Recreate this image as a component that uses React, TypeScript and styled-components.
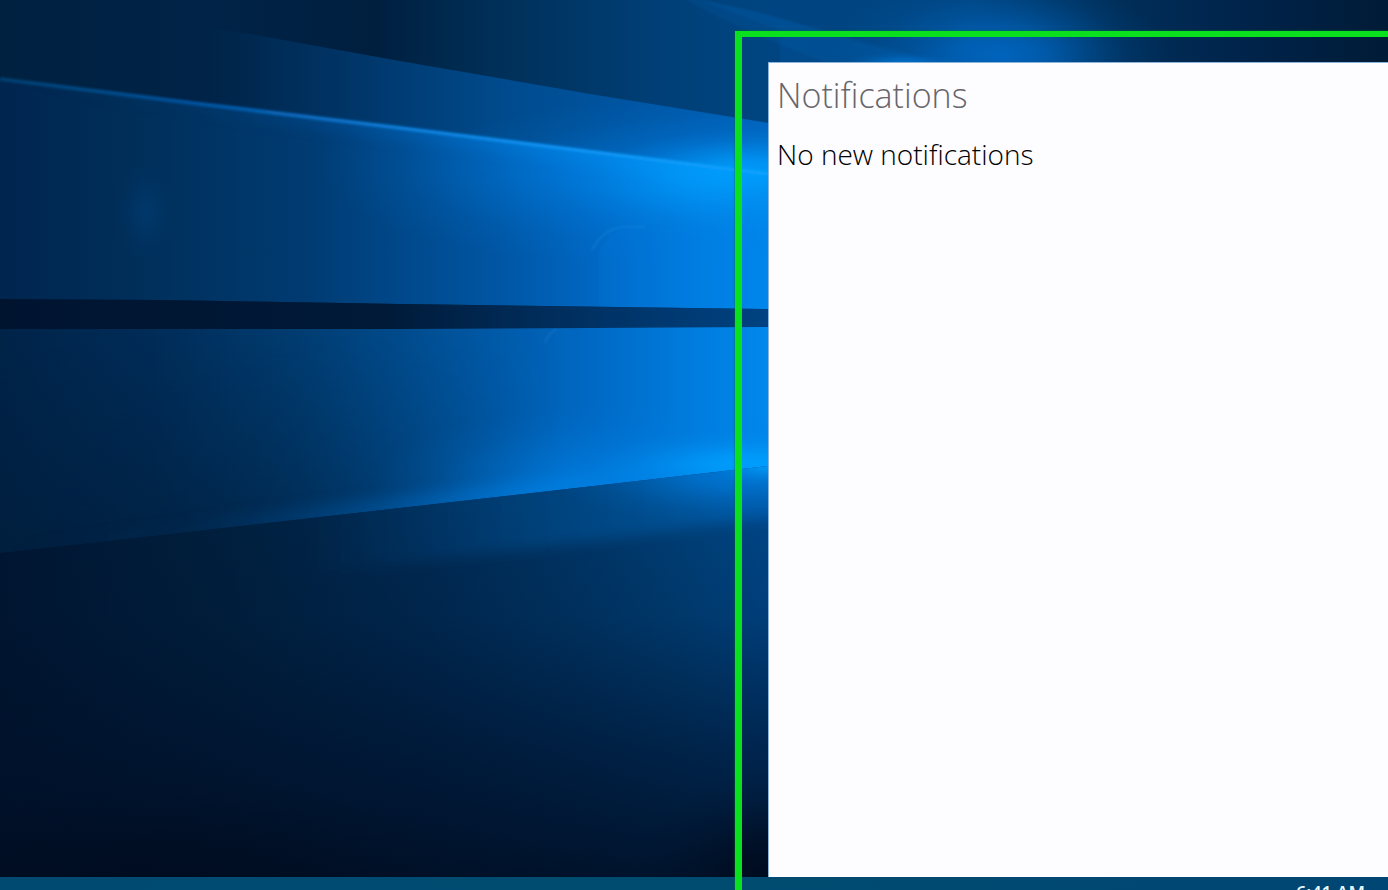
import React from "react";
import styled, { createGlobalStyle } from "styled-components";

const GlobalStyle = createGlobalStyle`
  *, *::before, *::after { box-sizing: border-box; }
  body {
    margin: 0;
    font-family: "Open Sans", "Noto Sans", sans-serif;
    background: #001c38;
  }
`;

const Desktop = styled.div`
  position: relative;
  display: grid;
  grid-template-columns: minmax(0, 735fr) minmax(0, 653fr);
  grid-template-rows: minmax(0, 1fr) 13px;
  height: 100vh;
  overflow: hidden;
`;

const Wallpaper = styled.svg`
  position: absolute;
  inset: 0;
  width: 100%;
  height: 100%;
`;

const Taskbar = styled.footer`
  position: relative;
  grid-column: 1 / -1;
  grid-row: 2;
  display: flex;
  justify-content: flex-end;
  align-items: flex-start;
  padding: 3px 23px 0;
  overflow: hidden;
  background: linear-gradient(90deg, #004a72, #004c70 50%, #004674);
`;

const Clock = styled.time`
  font-size: 18px;
  line-height: 24px;
  font-weight: 600;
  color: #e8fbff;
  white-space: nowrap;
`;

const Highlight = styled.div`
  position: relative;
  grid-column: 2;
  grid-row: 1 / -1;
  display: flex;
  margin-top: 31px;
  padding: 25px 0 13px 26px;
  border: solid #0be01f;
  border-width: 6px 0 0 7px;
  box-shadow: 0 0 2px #04702a;
`;

const Panel = styled.section`
  flex: 1;
  padding: 8px;
  background: #fdfcff;
  border: solid #8db4d8;
  border-width: 1px 0 0 1px;
`;

const Title = styled.h1`
  margin: 0;
  font-size: 34px;
  line-height: 48px;
  font-weight: 330;
  color: #67656b;
`;

const Message = styled.p`
  margin: 15px 0 0;
  font-size: 28px;
  line-height: 40px;
  font-weight: 330;
  color: #000;
`;

type Stop = [number, string, number?];

const Stops = ({ list }: { list: Stop[] }) => (
  <>
    {list.map(([offset, color, opacity = 1]) => (
      <stop key={offset} offset={offset} stopColor={color} stopOpacity={opacity} />
    ))}
  </>
);

const Across = ({ id, list }: { id: string; list: Stop[] }) => (
  <linearGradient id={id} gradientUnits="userSpaceOnUse" x1="0" y1="0" x2="768" y2="0">
    <Stops list={list} />
  </linearGradient>
);

const Glow = ({ id, color, strength }: { id: string; color: string; strength: number }) => (
  <radialGradient id={id}>
    <Stops list={[[0, color, strength], [0.25, color, strength * 0.8], [0.5, color, strength * 0.42], [0.75, color, strength * 0.13], [1, color, 0]]} />
  </radialGradient>
);

const WindowLight = () => (
  <Wallpaper viewBox="0 0 1388 890" preserveAspectRatio="none" aria-hidden="true">
    <defs>
      <linearGradient id="sky" gradientUnits="userSpaceOnUse" x1="0" y1="0" x2="1388" y2="0">
        <Stops list={[[0, "#002140"], [0.15, "#002347"], [0.27, "#001f3f"], [0.36, "#003059"], [0.48, "#004078"], [0.56, "#004582"], [0.7, "#004480"], [0.8, "#002f5a"], [0.9, "#00234a"], [1, "#001b36"]]} />
      </linearGradient>
      <Across id="band" list={[[0, "#002449", 0], [0.26, "#002c55", 0], [0.36, "#002f5c", 0.8], [0.5, "#003a70"], [0.65, "#004a8c"], [0.85, "#0057a6"], [1, "#0061b8"]]} />
      <Across id="upper" list={[[0, "#00254e"], [0.2, "#00305c"], [0.4, "#003b72"], [0.52, "#00488a"], [0.65, "#0056a4"], [0.78, "#0068c4"], [0.9, "#007cdf"], [1, "#0088ec"]]} />
      <Across id="gap" list={[[0, "#001430"], [0.5, "#001a38"], [0.65, "#002852"], [0.8, "#003468"], [1, "#004282"]]} />
      <Across id="lower" list={[[0, "#002348"], [0.2, "#002c58"], [0.4, "#003f76"], [0.52, "#004d90"], [0.65, "#005cac"], [0.78, "#006ac6"], [0.9, "#007cde"], [1, "#0088ec"]]} />
      <Across id="ground" list={[[0, "#001632"], [0.3, "#00203f"], [0.55, "#002952"], [0.75, "#003566"], [0.9, "#004078"], [1, "#004688"]]} />
      <Across id="underGlow" list={[[0.4, "#0066b8", 0], [0.7, "#0066b8", 0.3], [1, "#0068c0", 0.5]]} />
      <linearGradient id="fade" x1="0" y1="0" x2="0" y2="1">
        <Stops list={[[0, "#000c20", 0], [0.3, "#000f26", 0.15], [0.65, "#000f28", 0.6], [1, "#000c20", 0.88]]} />
      </linearGradient>
      <linearGradient id="shade" gradientUnits="userSpaceOnUse" x1="200" y1="330" x2="225" y2="530">
        <Stops list={[[0, "#001c38", 0], [1, "#001c38", 0.65]]} />
      </linearGradient>
      <linearGradient id="paneDim" gradientUnits="userSpaceOnUse" x1="0" y1="0" x2="560" y2="0">
        <Stops list={[[0, "#fff", 1], [0.45, "#fff", 0.85], [1, "#fff", 0]]} />
      </linearGradient>
      <mask id="leftOnly">
        <rect width="768" height="890" fill="url(#paneDim)" />
      </mask>
      <Across id="beam" list={[[0, "#0a4d84", 0.6], [0.25, "#06509a"], [0.5, "#0876ce"], [0.7, "#078cec"], [1, "#08a2ff"]]} />
      <Across id="edge" list={[[0, "#006fd0", 0], [0.25, "#005ca8", 0.08], [0.45, "#0068c0", 0.5], [0.7, "#0088ec", 0.9], [1, "#00a0ff"]]} />
      <Glow id="bright" color="#00a0ff" strength={0.85} />
      <Glow id="mid" color="#007de0" strength={0.8} />
      <Glow id="soft" color="#006ac8" strength={0.85} />
      <Glow id="dark" color="#000a1c" strength={0.85} />
      <clipPath id="bandClip"><path d="M0 0 L250 34 L400 61 L590 94 L768 123 V174 L0 78Z" /></clipPath>
      <clipPath id="upperClip"><path d="M0 78 L200 103 L400 127 L768 174 V309 L400 304 L160 300 L0 299Z" /></clipPath>
      <clipPath id="lowerClip"><path d="M0 329 H400 L768 327 V466 L400 508 L0 553Z" /></clipPath>
      <clipPath id="groundClip"><path d="M0 553 L400 508 L768 466 V890 H0Z" /></clipPath>
      <filter id="haze" x="-10%" y="-50%" width="120%" height="200%"><feGaussianBlur stdDeviation="7" /></filter>
      <filter id="line" x="-5%" y="-20%" width="110%" height="140%"><feGaussianBlur stdDeviation="1" /></filter>
    </defs>

    <rect width="1388" height="890" fill="url(#sky)" />
    <path d="M680 -4 C760 8 850 40 950 64 H830 C780 45 720 20 680 -4Z" fill="#0066bc" opacity="0.16" filter="url(#line)" />
    <path d="M700 0 C780 14 850 42 930 62 H780 V30 L700 0Z" fill="#0062b4" opacity="0.2" filter="url(#line)" />
    <ellipse cx="1000" cy="56" rx="170" ry="80" fill="url(#soft)" />
    <ellipse cx="900" cy="66" rx="60" ry="14" fill="url(#mid)" />

    <g clipPath="url(#bandClip)">
      <rect width="768" height="180" fill="url(#band)" />
      <ellipse cx="740" cy="175" rx="340" ry="80" fill="url(#mid)" />
      <ellipse cx="750" cy="172" rx="150" ry="42" fill="url(#bright)" />
    </g>

    <g clipPath="url(#upperClip)">
      <rect y="70" width="768" height="250" fill="url(#upper)" />
      <ellipse cx="640" cy="165" rx="320" ry="100" fill="url(#mid)" />
      <ellipse cx="720" cy="172" rx="170" ry="66" fill="url(#bright)" />
      <ellipse cx="145" cy="212" rx="30" ry="50" fill="url(#soft)" opacity="0.16" />
      <path d="M599 310 V265 Q594 242 622 229 H768 V310Z" fill="#0083ec" opacity="0.15" filter="url(#line)" />
      <path d="M592 250 Q602 230 622 227 H645" fill="none" stroke="#2a98ee" strokeWidth="2" opacity="0.25" filter="url(#line)" />
      <path d="M0 79 L400 130 L768 177" fill="none" stroke="url(#edge)" strokeWidth="20" opacity="0.45" filter="url(#haze)" />
    </g>
    <path d="M0 79 L200 104 L400 128 L768 174" fill="none" stroke="url(#beam)" strokeWidth="4" filter="url(#line)" />

    <path d="M0 299 L160 300 L400 304 L768 309 V327 L400 329 H0Z" fill="url(#gap)" />

    <g clipPath="url(#lowerClip)">
      <rect y="320" width="768" height="240" fill="url(#lower)" />
      <rect y="320" width="768" height="240" fill="url(#shade)" mask="url(#leftOnly)" />
      <path d="M0 553 L400 508 L768 466" fill="none" stroke="url(#edge)" strokeWidth="24" opacity="0.6" filter="url(#haze)" />
      <ellipse cx="640" cy="480" rx="270" ry="75" fill="url(#mid)" />
      <ellipse cx="750" cy="464" rx="160" ry="34" fill="url(#bright)" />
      <path d="M545 343 Q548 333 557 329" fill="none" stroke="#2a88dd" strokeWidth="2" opacity="0.3" filter="url(#line)" />
    </g>

    <g clipPath="url(#groundClip)">
      <rect y="460" width="768" height="430" fill="url(#ground)" />
      <rect y="500" width="768" height="390" fill="url(#fade)" />
      <path d="M300 505 L780 450 V516 L560 545 L300 575Z" fill="url(#underGlow)" filter="url(#haze)" />
      <ellipse cx="740" cy="474" rx="190" ry="50" fill="url(#mid)" />
      <ellipse cx="768" cy="464" rx="60" ry="22" fill="url(#bright)" />
      <ellipse cx="768" cy="880" rx="130" ry="110" fill="url(#dark)" />
      <ellipse cx="180" cy="890" rx="300" ry="120" fill="url(#dark)" opacity="0.6" />
    </g>
  </Wallpaper>
);

export default function App() {
  return (
    <>
      <GlobalStyle />
      <Desktop>
        <WindowLight />
        <Taskbar>
          <Clock dateTime="06:41">6:41 AM</Clock>
        </Taskbar>
        <Highlight>
          <Panel aria-labelledby="notifications-title">
            <Title id="notifications-title">Notifications</Title>
            <Message>No new notifications</Message>
          </Panel>
        </Highlight>
      </Desktop>
    </>
  );
}
